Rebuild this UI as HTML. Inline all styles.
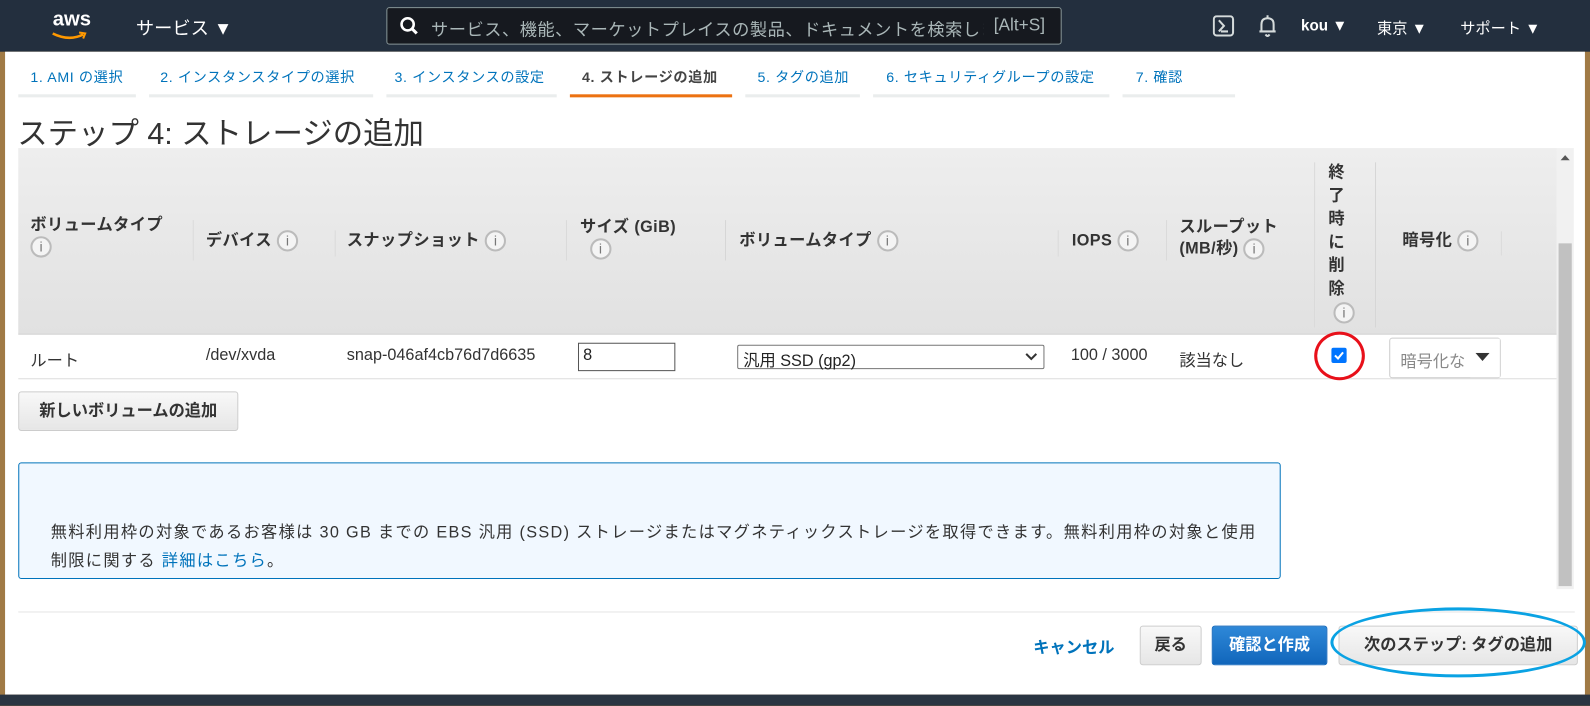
<!DOCTYPE html>
<html><head><meta charset="utf-8"><style>
*{margin:0;padding:0;box-sizing:border-box}
body{width:1590px;height:696px;overflow:hidden;background:#a07a45;font-family:"Liberation Sans","Noto Sans CJK JP",sans-serif;position:relative}
#w{position:absolute;left:0;top:0;width:1568px;height:687px;transform:scale(1.01403);transform-origin:0 0}
.a{position:absolute;white-space:nowrap}
#nav{position:absolute;left:0;top:0;width:1568px;height:51px;background:#232f3e}
#page{position:absolute;left:5px;top:51px;width:1558px;height:634px;background:#fff}
.tab{position:absolute;top:66px;font-size:14px;color:#0073bb;letter-spacing:0.6px}
.tabl{position:absolute;top:93px;height:3px;background:#eaeded}
.th{position:absolute;font-size:16px;font-weight:bold;color:#333;line-height:21px;letter-spacing:0.4px}
.i{display:inline-block;width:21px;height:21px;border:2px solid #bbb;border-radius:50%;color:#777;font-size:14px;text-align:center;line-height:17px;font-weight:normal;vertical-align:middle;background:#f4f4f4;letter-spacing:0}
.sep{position:absolute;width:1px;background:#fff;border-left:1px solid #d5d5d5}
.td{position:absolute;top:342px;font-size:16px;color:#333}
.btn{position:absolute;border:1px solid #ccc;border-radius:3px;background:linear-gradient(#f8f8f8,#e6e6e6);font-size:16px;font-weight:bold;color:#333;text-align:center}
</style></head><body><div id="w">
<div id="nav">
 <div class="a" style="left:52px;top:8px;color:#fff;font-size:20px;font-weight:bold">aws</div>
 <svg class="a" style="left:50px;top:31px" width="36" height="10"><path d="M2 2 Q18 10 32 3" stroke="#f90" stroke-width="2.5" fill="none"/><path d="M28 1 L34 2 L32 7" stroke="#f90" stroke-width="2" fill="none"/></svg>
 <div class="a" style="left:134px;top:14px;color:#fff;font-size:18px">サービス ▼</div>
 <div class="a" style="left:381px;top:7px;width:666px;height:37px;border:1px solid #879596;border-radius:3px;background:#16191f"></div>
 <svg class="a" style="left:394px;top:16px" width="20" height="20"><circle cx="8" cy="8" r="6" stroke="#fff" stroke-width="2.5" fill="none"/><path d="M12 12 L17 17" stroke="#fff" stroke-width="3"/></svg>
 <div class="a" style="left:425px;top:15px;color:#aab7b8;font-size:17px;width:545px;overflow:hidden;letter-spacing:0.5px">サービス、機能、マーケットプレイスの製品、ドキュメントを検索しま</div>
 <div class="a" style="left:980px;top:15px;color:#aab7b8;font-size:17px">[Alt+S]</div>
 <svg class="a" style="left:1196px;top:15px" width="22" height="22"><rect x="1" y="1" width="19" height="19" rx="3" stroke="#d5dbdb" stroke-width="2" fill="none"/><path d="M6 5 L11 10.5 L6 16 M8 16 H15" stroke="#d5dbdb" stroke-width="2" fill="none"/></svg>
 <svg class="a" style="left:1240px;top:14px" width="20" height="24"><path d="M4 17 V10 Q4 4 10 4 Q16 4 16 10 V17 H18 H2 Z" stroke="#d5dbdb" stroke-width="2" fill="none"/><path d="M8 20 Q10 23 12 20" stroke="#d5dbdb" stroke-width="2" fill="none"/><path d="M10 1 V4" stroke="#d5dbdb" stroke-width="2"/></svg>
 <div class="a" style="left:1283px;top:17px;color:#fff;font-size:15px;font-weight:bold">kou ▼</div>
 <div class="a" style="left:1358px;top:17px;color:#fff;font-size:15px">東京 ▼</div>
 <div class="a" style="left:1440px;top:17px;color:#fff;font-size:15px">サポート ▼</div>
</div>
<div id="page"></div>
<div class="tab" style="left:30px">1. AMI の選択</div>
<div class="tab" style="left:158px">2. インスタンスタイプの選択</div>
<div class="tab" style="left:389px">3. インスタンスの設定</div>
<div class="tab" style="left:574px;color:#444;font-weight:bold">4. ストレージの追加</div>
<div class="tab" style="left:747px">5. タグの追加</div>
<div class="tab" style="left:874px">6. セキュリティグループの設定</div>
<div class="tab" style="left:1120px">7. 確認</div>
<div class="tabl" style="left:18px;width:116px"></div>
<div class="tabl" style="left:147px;width:221px"></div>
<div class="tabl" style="left:381px;width:168px"></div>
<div class="tabl" style="left:562px;width:160px;background:#ec7211"></div>
<div class="tabl" style="left:735px;width:113px"></div>
<div class="tabl" style="left:861px;width:233px"></div>
<div class="tabl" style="left:1107px;width:111px"></div>
<div class="a" style="left:17px;top:107px;font-size:30px;color:#333">ステップ 4: ストレージの追加</div>
<div class="a" style="left:18px;top:146px;width:1517px;height:184px;background:linear-gradient(#eee,#e1e1e1);border-bottom:1px solid #ccc"></div>
<div class="sep" style="left:190px;top:217px;height:40px"></div>
<div class="sep" style="left:330px;top:227px;height:26px"></div>
<div class="sep" style="left:558px;top:217px;height:40px"></div>
<div class="sep" style="left:715px;top:217px;height:40px"></div>
<div class="sep" style="left:1043px;top:227px;height:26px"></div>
<div class="sep" style="left:1150px;top:217px;height:40px"></div>
<div class="sep" style="left:1296px;top:160px;height:163px"></div>
<div class="sep" style="left:1356px;top:160px;height:163px"></div>
<div class="sep" style="left:1480px;top:228px;height:24px"></div>
<div class="th" style="left:30px;top:212px">ボリュームタイプ<br><span class="i">i</span></div>
<div class="th" style="left:203px;top:227px">デバイス <span class="i">i</span></div>
<div class="th" style="left:342px;top:227px">スナップショット <span class="i">i</span></div>
<div class="th" style="left:572px;top:214px">サイズ (GiB)<br>&nbsp;&nbsp;<span class="i">i</span></div>
<div class="th" style="left:729px;top:227px">ボリュームタイプ <span class="i">i</span></div>
<div class="th" style="left:1057px;top:227px">IOPS <span class="i">i</span></div>
<div class="th" style="left:1163px;top:214px">スループット<br>(MB/秒) <span class="i">i</span></div>
<div class="th" style="left:1310px;top:159px;line-height:23px">終<br>了<br>時<br>に<br>削<br>除<br>&nbsp;<span class="i">i</span></div>
<div class="th" style="left:1383px;top:227px">暗号化 <span class="i">i</span></div>
<div class="a" style="left:18px;top:373px;width:1517px;height:1px;background:#ddd"></div>
<div class="td" style="left:30px">ルート</div>
<div class="td" style="left:203px">/dev/xvda</div>
<div class="td" style="left:342px">snap-046af4cb76d7d6635</div>
<div class="a" style="left:570px;top:338px;width:96px;height:28px;border:1px solid #555;font-size:16px;padding:3px 4px;color:#222">8</div>
<div class="a" style="left:727px;top:340px;width:303px;height:24px;border:1px solid #767676;border-radius:2px;font-size:16px;padding:1px 5px;color:#222">汎用 SSD (gp2)</div>
<svg class="a" style="left:1010px;top:347px" width="14" height="10"><path d="M2 2 L7 7 L12 2" stroke="#333" stroke-width="2" fill="none"/></svg>
<div class="td" style="left:1056px">100 / 3000</div>
<div class="td" style="left:1163px">該当なし</div>
<div class="a" style="left:1313px;top:343px;width:15px;height:15px;background:#0075ff;border-radius:2px"></div>
<svg class="a" style="left:1313px;top:343px" width="15" height="15"><path d="M3.5 7.5 L6.5 10.5 L11.5 4.5" stroke="#fff" stroke-width="2" fill="none"/></svg>
<div class="a" style="left:1296px;top:327px;width:50px;height:48px;border:3px solid #e8101a;border-radius:50%"></div>
<div class="a" style="left:1370px;top:333px;width:110px;height:40px;border:1px solid #ccc;border-radius:3px;font-size:16px;color:#888;padding:9px 10px;overflow:hidden">暗号化な</div>
<div class="a" style="left:1450px;top:334px;width:29px;height:38px;background:#fff"></div>
<svg class="a" style="left:1455px;top:348px" width="14" height="9"><path d="M0 0 H14 L7 8 Z" fill="#333"/></svg>
<div class="btn" style="left:18px;top:386px;width:217px;height:39px;line-height:37px">新しいボリュームの追加</div>
<div class="a" style="left:18px;top:456px;width:1245px;height:115px;background:#f1f8ff;border:1px solid #0073bb;border-radius:3px"></div>
<div class="a" style="left:50px;top:512px;font-size:16px;color:#333;line-height:28px;letter-spacing:1.3px">無料利用枠の対象であるお客様は 30 GB までの EBS 汎用 (SSD) ストレージまたはマグネティックストレージを取得できます。無料利用枠の対象と使用<br>制限に関する <span style="color:#0073bb">詳細はこちら</span>。</div>
<div class="a" style="left:1535px;top:146px;width:17px;height:435px;background:#f1f1f1"></div>
<div class="a" style="left:1537px;top:240px;width:13px;height:338px;background:#c1c1c1"></div>
<svg class="a" style="left:1537px;top:152px" width="13" height="8"><path d="M2 6 L6.5 1 L11 6Z" fill="#555"/></svg>
<div class="a" style="left:18px;top:603px;width:1535px;height:1px;background:#e5e5e5"></div>
<div class="a" style="left:1019px;top:625px;font-size:16px;font-weight:bold;color:#0073bb">キャンセル</div>
<div class="btn" style="left:1124px;top:617px;width:61px;height:39px;line-height:37px">戻る</div>
<div class="btn" style="left:1195px;top:617px;width:114px;height:39px;line-height:37px;background:linear-gradient(#2e88d8,#1166bb);border-color:#1166bb;color:#fff">確認と作成</div>
<div class="btn" style="left:1320px;top:617px;width:236px;height:39px;line-height:37px">次のステップ: タグの追加</div>
<div class="a" style="left:1312px;top:599px;width:252px;height:69px;border:3px solid #0aa2e3;border-radius:50%"></div>
<div class="a" style="left:0;top:685px;width:1568px;height:11px;background:#2a3542"></div>
</div></body></html>
